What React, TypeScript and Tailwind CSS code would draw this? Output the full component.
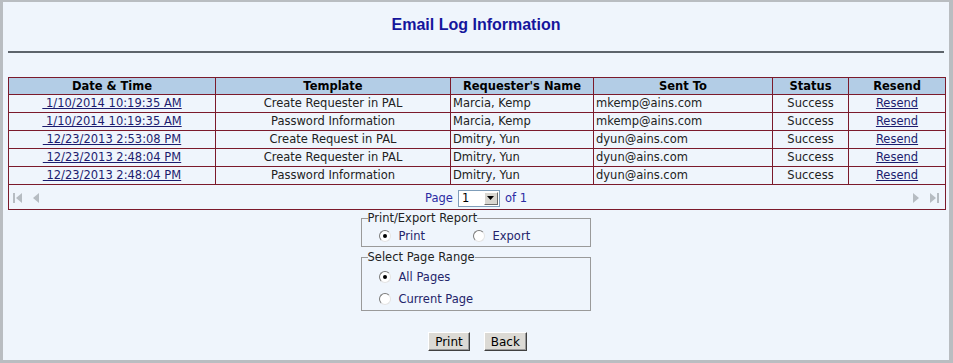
import React from 'react';

type LogRow = {
  date: string;
  template: string;
  name: string;
  sentTo: string;
  status: string;
};

const rows: LogRow[] = [
  { date: '1/10/2014 10:19:35 AM', template: 'Create Requester in PAL', name: 'Marcia, Kemp', sentTo: 'mkemp@ains.com', status: 'Success' },
  { date: '1/10/2014 10:19:35 AM', template: 'Password Information', name: 'Marcia, Kemp', sentTo: 'mkemp@ains.com', status: 'Success' },
  { date: '12/23/2013 2:53:08 PM', template: 'Create Request in PAL', name: 'Dmitry, Yun', sentTo: 'dyun@ains.com', status: 'Success' },
  { date: '12/23/2013 2:48:04 PM', template: 'Create Requester in PAL', name: 'Dmitry, Yun', sentTo: 'dyun@ains.com', status: 'Success' },
  { date: '12/23/2013 2:48:04 PM', template: 'Password Information', name: 'Dmitry, Yun', sentTo: 'dyun@ains.com', status: 'Success' },
];

const verdana = "font-['DejaVu_Sans',Verdana,sans-serif]";

const Radio: React.FC<{ checked?: boolean }> = ({ checked }) => (
  <span className="relative inline-flex h-[12px] w-[12px] shrink-0 items-center justify-center rounded-full border border-t-[#7a7a7a] border-l-[#7a7a7a] border-r-[#e4e4e4] border-b-[#e4e4e4] bg-white">
    {checked && <span className="h-[4px] w-[4px] rounded-full bg-black" />}
  </span>
);

const Arrow: React.FC<{ dir: 'left' | 'right'; bar?: boolean }> = ({ dir, bar }) => (
  <svg width="10" height="12" viewBox="0 0 10 12" className="fill-[#b6bcc2]">
    {dir === 'left' ? (
      <>
        {bar && <rect x="0" y="1" width="2" height="10" />}
        <polygon points={bar ? '9,1 3,6 9,11' : '8,1 2,6 8,11'} />
      </>
    ) : (
      <>
        <polygon points={bar ? '1,1 7,6 1,11' : '2,1 8,6 2,11'} />
        {bar && <rect x="8" y="1" width="2" height="10" />}
      </>
    )}
  </svg>
);

const Button: React.FC<{ label: string }> = ({ label }) => (
  <button className="flex h-[19px] items-center border border-t-white border-l-white border-r-[#404040] border-b-[#404040] bg-[#dcdad5] px-[6px] text-[12px] leading-none text-black shadow-[inset_-1px_-1px_0_#9a9a9a]">
    {label}
  </button>
);

const App: React.FC = () => {
  return (
    <div className={`h-[363px] w-[953px] overflow-hidden border-t-2 border-l-[3px] border-r-4 border-b-[3px] border-[#b9bdc1] bg-[#eff5fc] ${verdana}`}>
      {/* Heading */}
      <div className="flex h-[44px] items-end justify-center pb-[13px]">
        <h1 className="font-['Liberation_Sans',Arial,sans-serif] text-[16px] font-bold leading-none text-[#15159c]">
          Email Log Information
        </h1>
      </div>
      <div className="mx-[5px] mt-[5px] h-[2px] bg-[#5d646b]" />

      {/* Log table */}
      <div className="mx-[5px] mt-[24px]">
        <table className="w-[937px] table-fixed border-collapse border border-[#7b1a2b] text-[11.5px] leading-[15px] text-[#222]">
          <colgroup>
            <col className="w-[207px]" />
            <col className="w-[235px]" />
            <col className="w-[143px]" />
            <col className="w-[179px]" />
            <col className="w-[76px]" />
            <col className="w-[97px]" />
          </colgroup>
          <thead>
            <tr className="h-[17px] bg-[#b3cde6] font-bold text-black">
              <th className="border border-[#7b1a2b] p-0">Date &amp; Time</th>
              <th className="border border-[#7b1a2b] p-0">Template</th>
              <th className="border border-[#7b1a2b] p-0">Requester's Name</th>
              <th className="border border-[#7b1a2b] p-0">Sent To</th>
              <th className="border border-[#7b1a2b] p-0">Status</th>
              <th className="border border-[#7b1a2b] p-0">Resend</th>
            </tr>
          </thead>
          <tbody>
            {rows.map((r, i) => (
              <tr key={i} className="h-[18px]">
                <td className="border border-[#7b1a2b] p-0 text-center">
                  <a href="#" className="text-[#1c1c6e] underline">{'\u00a0' + r.date}</a>
                </td>
                <td className="border border-[#7b1a2b] p-0 text-center">{r.template}</td>
                <td className="border border-[#7b1a2b] px-[2px] py-0">{r.name}</td>
                <td className="border border-[#7b1a2b] px-[2px] py-0">{r.sentTo}</td>
                <td className="border border-[#7b1a2b] p-0 text-center">{r.status}</td>
                <td className="border border-[#7b1a2b] p-0 text-center">
                  <a href="#" className="text-[#1c1c6e] underline">Resend</a>
                </td>
              </tr>
            ))}
            <tr className="h-[25px]">
              <td colSpan={6} className="border border-[#7b1a2b] px-[3px] py-0">
                <div className="flex items-center">
                  <div className="flex flex-1 items-center gap-[8px] pl-[1px] pt-[1px]">
                    <Arrow dir="left" bar />
                    <Arrow dir="left" />
                  </div>
                  <div className="flex items-center gap-[5px] pt-[2px] text-[#2b2ba3]">
                    <span>Page</span>
                    <span className="flex h-[17px] w-[42px] items-center border border-[#7f9db9] bg-white">
                      <span className="flex-1 pl-[3px] text-black">1</span>
                      <span className="mr-[1px] flex h-[13px] w-[14px] items-center justify-center border border-t-white border-l-white border-r-[#6a6a6a] border-b-[#6a6a6a] bg-[#d8d6d0]">
                        <svg width="7" height="4" viewBox="0 0 7 4"><polygon points="0,0 7,0 3.5,4" fill="#000" /></svg>
                      </span>
                    </span>
                    <span>of 1</span>
                  </div>
                  <div className="flex flex-1 items-center justify-end gap-[8px] pr-[3px] pt-[1px]">
                    <Arrow dir="right" />
                    <Arrow dir="right" bar />
                  </div>
                </div>
              </td>
            </tr>
          </tbody>
        </table>
      </div>

      {/* Print options */}
      <div className="mt-[2px] flex flex-col items-center text-[11.5px] leading-[13px]">
        <fieldset className="ml-[-1px] w-[230px] border border-[#9a9a9a] px-[6px] pt-[4px] pb-[3px]">
          <legend className="px-0 text-[#222]">Print/Export Report</legend>
          <div className="flex h-[14px] items-center pl-[11px] text-[#24246a]">
            <label className="flex w-[94px] items-center gap-[8px]">
              <Radio checked />
              <span className="pt-[1px]">Print</span>
            </label>
            <label className="flex items-center gap-[8px]">
              <Radio />
              <span className="pt-[1px]">Export</span>
            </label>
          </div>
        </fieldset>
        <fieldset className="ml-[-1px] mt-[4px] w-[230px] border border-[#9a9a9a] px-[6px] pt-[6px] pb-[4px]">
          <legend className="px-0 text-[#222]">Select Page Range</legend>
          <div className="flex flex-col gap-[8px] pl-[11px] text-[#24246a]">
            <label className="flex h-[14px] items-center gap-[8px]">
              <Radio checked />
              <span className="pt-[1px]">All Pages</span>
            </label>
            <label className="flex h-[14px] items-center gap-[8px]">
              <Radio />
              <span className="pt-[1px]">Current Page</span>
            </label>
          </div>
        </fieldset>
        <div className="ml-[3px] mt-[21px] flex gap-[14px]">
          <Button label="Print" />
          <Button label="Back" />
        </div>
      </div>
    </div>
  );
};

export default App;
